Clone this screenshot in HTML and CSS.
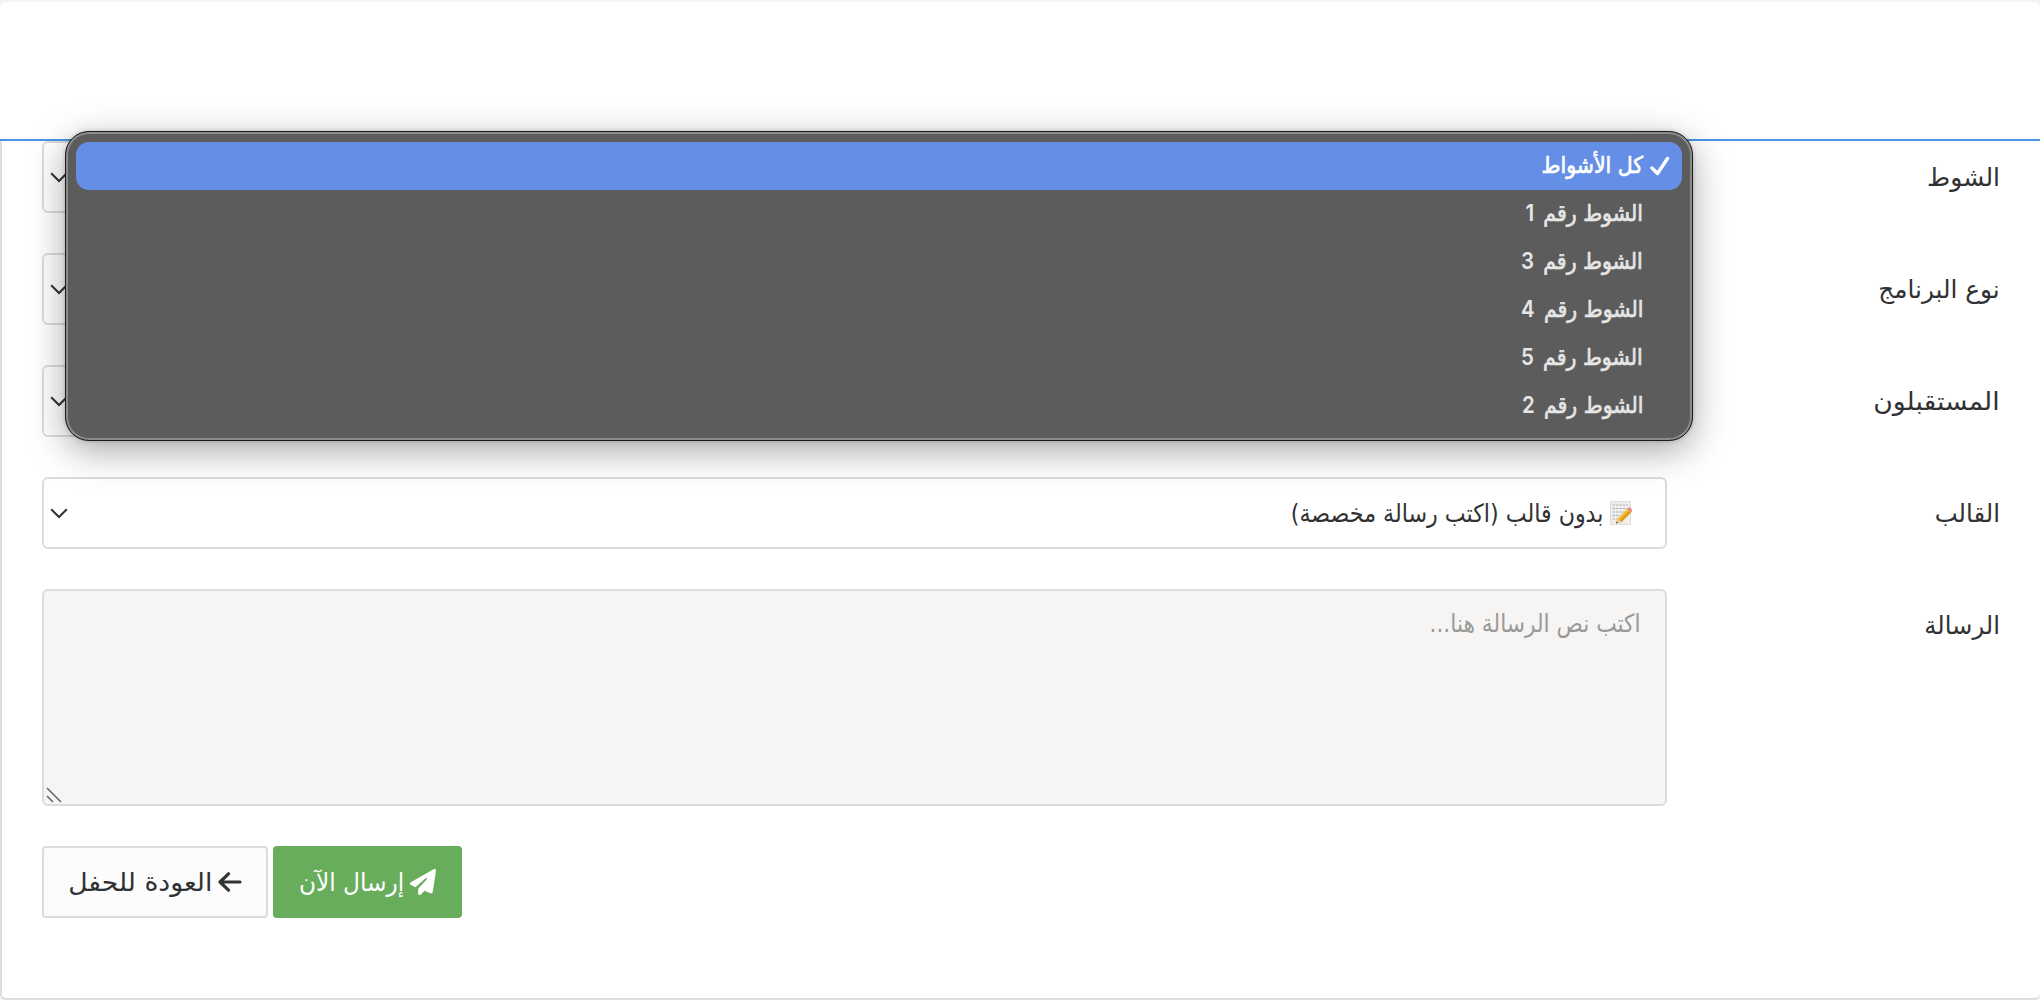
FILE: index.html
```html
<!DOCTYPE html>
<html lang="ar" dir="rtl">
<head>
<meta charset="utf-8">
<title>إرسال رسالة</title>
<link rel="stylesheet" href="styles.css">
</head>
<body>
<header class="topbar"></header>
<main class="panel">
  <form class="form">
    <div class="row">
      <label class="label"><span class="w-round">الشوط</span></label>
      <div class="field select"><svg class="chevron" viewBox="0 0 18 11"><path d="M1.2 1.2 9 9 16.8 1.2"/></svg></div>
    </div>
    <div class="row">
      <label class="label"><span class="w-program">نوع البرنامج</span></label>
      <div class="field select"><svg class="chevron" viewBox="0 0 18 11"><path d="M1.2 1.2 9 9 16.8 1.2"/></svg></div>
    </div>
    <div class="row">
      <label class="label"><span class="w-recipients">المستقبلون</span></label>
      <div class="field select"><svg class="chevron" viewBox="0 0 18 11"><path d="M1.2 1.2 9 9 16.8 1.2"/></svg></div>
    </div>
    <div class="row">
      <label class="label"><span class="w-template">القالب</span></label>
      <div class="field select">
        <svg class="memo" viewBox="0 0 22 24">
          <rect x=".5" y=".5" width="20" height="23" fill="#eeeeec" stroke="#dfdfdc"/>
          <path d="M2.5 4H18M2.5 7.5H17M2.5 11H14M2.5 14.5H10M2.5 18H7" stroke="#b4b4b4" stroke-width="1.2" stroke-dasharray="2.5 .9"/>
          <path d="M6 22.5 7.5 17.5 17 8 21 11.5 11.5 21Z" fill="#f5c131"/>
          <path d="M9.5 19.3 19 9.7 21 11.5 11.5 21Z" fill="#dc9a20"/>
          <path d="M17 8 18.2 6.8Q20 6 21.5 8 22.5 9.5 21.2 11.4Z" fill="#ee7f86"/>
          <path d="M6 22.5 7.5 17.5 11.5 21Z" fill="#e9cf9c"/>
          <path d="M6 22.5 6.6 20.5 8.2 21.8Z" fill="#444"/>
        </svg>
        <span class="value">بدون قالب (اكتب رسالة مخصصة)</span>
        <svg class="chevron" viewBox="0 0 18 11"><path d="M1.2 1.2 9 9 16.8 1.2"/></svg>
      </div>
    </div>
    <div class="row">
      <label class="label"><span class="w-message">الرسالة</span></label>
      <div class="field message">
        <span class="placeholder">اكتب نص الرسالة هنا...</span>
        <svg class="grip" viewBox="0 0 16 16"><path d="M1 1 15 15M1 9 7 15"/></svg>
      </div>
    </div>
    <div class="actions">
      <a class="btn send"><svg class="plane" viewBox="0 0 512 512"><path fill="#fff" d="M498.1 5.6c10.1 7 15.4 19.1 13.5 31.2l-64 416c-1.5 9.7-7.4 18.2-16 23s-18.9 5.4-28 1.6L284 427.7l-68.5 74.1c-8.900 9.700-22.900 12.900-35.200 8.100S160 493.200 160 480V396.400c0-4 1.500-7.800 4.200-10.700L331.800 202.800c5.800-6.300 5.600-16-.4-22s-15.700-6.400-22-.7L106 360.800 17.700 316.600C7.100 311.300.3 300.700 0 288.900s5.900-22.800 16.100-28.700l448-256c10.700-6.100 23.900-5.500 34 1.400z"/></svg><span class="w-send">إرسال الآن</span></a>
      <a class="btn back"><svg class="arrow" viewBox="0 0 24 20"><path d="M22 10H2.5M10.5 1.8 2 10 10.5 18.2"/></svg><span class="w-back">العودة للحفل</span></a>
    </div>
  </form>
</main>
<div class="menu">
  <div class="option active"><svg class="check" viewBox="0 0 20 20"><path d="M2 12 7.500 17.500 17.500 2.500"/></svg><span class="w-all">كل الأشواط</span></div>
  <div class="option"><span class="w-opt">الشوط رقم <b class="num">1</b></span></div>
  <div class="option"><span class="w-opt">الشوط رقم <b class="num">3</b></span></div>
  <div class="option"><span class="w-opt">الشوط رقم <b class="num">4</b></span></div>
  <div class="option"><span class="w-opt">الشوط رقم <b class="num">5</b></span></div>
  <div class="option"><span class="w-opt">الشوط رقم <b class="num">2</b></span></div>
</div>
</body>
</html>
```
FILE: styles.css
```css
* { box-sizing: border-box; }
html, body { height: 100%; }
body {
  margin: 0;
  display: flex;
  flex-direction: column;
  background: #f4f4f4;
  color: #303133;
  font-family: "DejaVu Sans", sans-serif;
  font-size: 25px;
  overflow: hidden;
}
.topbar {
  flex: none;
  height: 139px;
  margin-top: 2px;
  background: #fff;
  border-bottom: 2px solid #4796e6;
  border-radius: 6px 6px 0 0;
}
.panel {
  flex: 1;
  background: #fff;
  border: 2px solid #ddd;
  border-width: 0 0 2px 2px;
  border-radius: 0 0 6px 6px;
  padding: 0 40px;
}
.form { display: flex; flex-direction: column; gap: 40px; }
.row { display: flex; justify-content: space-between; }
.label { height: 72px; display: flex; align-items: center; }
span { display: inline-block; white-space: nowrap; transform-origin: right center; }
.w-program { transform: scaleX(.99); }
.w-recipients { transform: scaleX(1.065); }
.w-template { transform: scaleX(.975); }
.w-message { transform: scaleX(.97); }
.w-send { transform: scaleX(.93); }
.w-back { transform: scaleX(1.065); }
.field {
  width: 1625px;
  height: 72px;
  border: 2px solid #dcdcdc;
  border-radius: 6px;
  display: flex;
  align-items: center;
}
.select { padding: 0 33px 0 6px; gap: 7px; }
.value { transform: scaleX(.887); }
.chevron { width: 18px; height: 11px; margin-right: auto; }
.chevron path, .grip path, .arrow path, .check path { fill: none; stroke: #333; stroke-width: 2; }
.memo { width: 22px; height: 24px; }
.message { height: 217px; background: #f6f5f3; align-items: flex-start; justify-content: space-between; padding: 18px 25px 1px 2px; }
.placeholder { color: #999; transform: scaleX(.87); }
.grip { width: 16px; height: 16px; align-self: flex-end; }
.grip path { stroke: #666; stroke-width: 1.6; }
.actions { display: flex; justify-content: flex-end; gap: 5px; }
.btn { height: 72px; display: flex; align-items: center; gap: 6px; border-radius: 4px; }
.send { width: 189px; background: #68ad5c; color: #fff; padding-right: 26px; }
.back { width: 226px; background: #fcfcfc; border: 2px solid #dcdcdc; padding-right: 24px; }
.plane { width: 26px; height: 26px; }
.arrow { width: 24px; height: 20px; }
.arrow path { stroke-width: 3.2; stroke-linecap: round; stroke-linejoin: round; }
.menu {
  position: absolute;
  left: 65px;
  top: 131px;
  width: 1628px;
  height: 310px;
  padding: 10px;
  background: #5c5c5c;
  border: 1px solid #1c1c1c;
  border-radius: 24px;
  box-shadow: inset 0 0 0 2px #8c8c8c, 0 10px 36px rgba(0,0,0,.34), 0 0 4px rgba(0,0,0,.2);
}
.option {
  height: 48px;
  display: flex;
  align-items: center;
  padding: 0 39px 2px 0;
  color: #e6e6e6;
  font-size: 23px;
  -webkit-text-stroke: .7px currentColor;
}
.active { background: #658ee6; color: #fff; border-radius: 13px; padding-right: 12px; gap: 7px; }
.w-all, .w-opt { transform: scaleX(.89); }
.num {
  margin-right: 3px;
  font-family: Inter, sans-serif;
  font-weight: 600;
  line-height: 20px;
  -webkit-text-stroke: 0;
}
.check { width: 20px; height: 20px; margin-top: 2px; }
.check path { stroke: #fff; stroke-width: 3.4; stroke-linecap: round; stroke-linejoin: round; }
```
